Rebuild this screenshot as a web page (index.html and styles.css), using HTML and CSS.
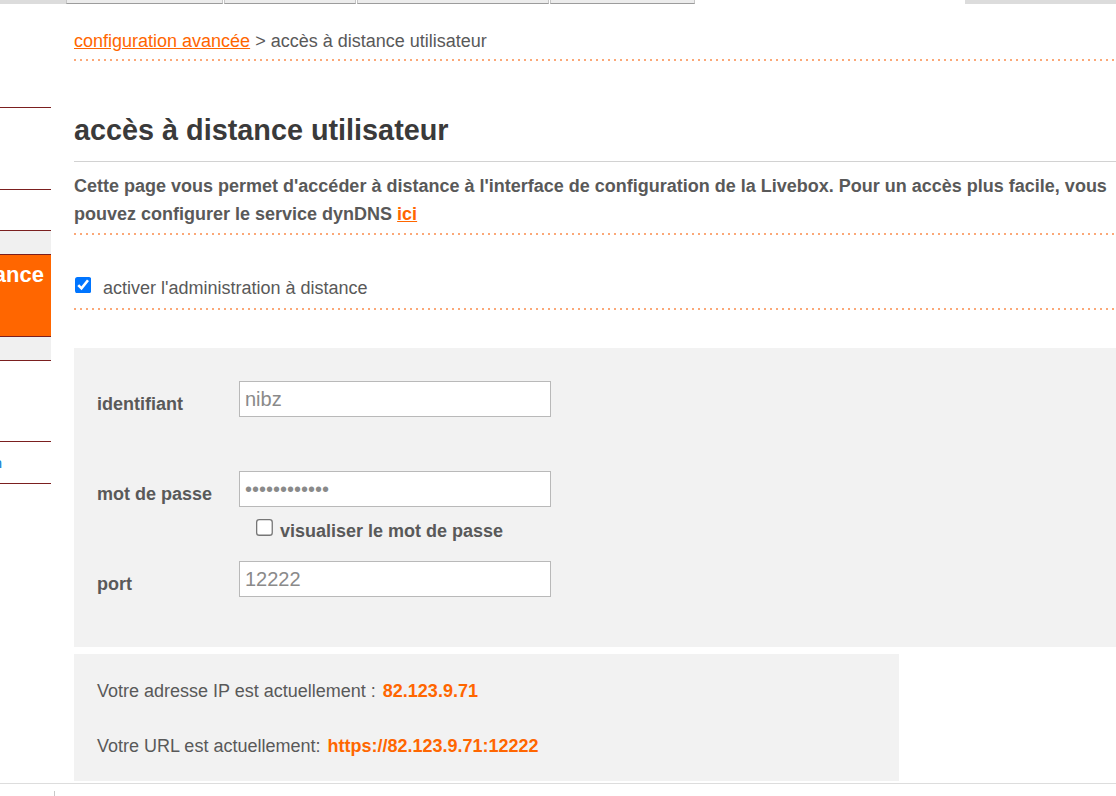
FILE: index.html
```html
<!DOCTYPE html>
<html lang="fr">
<head>
    <meta charset="UTF-8">
    <meta name="viewport" content="width=device-width, initial-scale=1.0">
    <title>accès à distance utilisateur</title>
    <link rel="stylesheet" href="styles.css">
</head>
<body>

    <div class="tabs">
        <div class="tabs-edge tabs-edge-left"></div>
        <div class="tab tab-1"></div>
        <div class="tab tab-2"></div>
        <div class="tab tab-3"></div>
        <div class="tab tab-4"></div>
        <div class="tabs-gap"></div>
        <div class="tabs-edge tabs-edge-right"></div>
    </div>

    <div class="page">
        <!-- menu de gauche (coupé par le défilement) -->
        <div class="sidebar">
            <div class="side-item side-a"></div>
            <div class="side-item side-b"></div>
            <div class="side-item side-c"></div>
            <div class="side-item side-active">
                <div class="side-active-label"><span>accès à distance</span></div>
            </div>
            <div class="side-item side-d"></div>
            <div class="side-item side-link"><span>utilisateurn</span></div>
        </div>

        <div class="main">
            <div class="breadcrumb">
                <a href="#">configuration avancée</a> &gt; accès à distance utilisateur
            </div>
            <div class="dots"></div>

            <h1>accès à distance utilisateur</h1>

            <p class="intro">Cette page vous permet d'accéder à distance à l'interface de configuration de la Livebox. Pour un accès plus facile, vous pouvez configurer le service dynDNS <a href="#">ici</a></p>
            <div class="dots"></div>

            <div class="enable-row">
                <input type="checkbox" id="enableRemote" checked>
                <label for="enableRemote">activer l'administration à distance</label>
            </div>
            <div class="dots"></div>

            <div class="form-panel">
                <div class="form-row">
                    <label for="login">identifiant</label>
                    <input type="text" id="login" value="nibz">
                </div>
                <div class="form-row form-row-pass">
                    <label for="password">mot de passe</label>
                    <input type="password" id="password" value="abcdefghijkl">
                </div>
                <div class="show-pass">
                    <input type="checkbox" id="showPass">
                    <label for="showPass">visualiser le mot de passe</label>
                </div>
                <div class="form-row form-row-port">
                    <label for="port">port</label>
                    <input type="text" id="port" value="12222">
                </div>
            </div>

            <div class="info-panel">
                <p>Votre adresse IP est actuellement : <span class="value">82.123.9.71</span></p>
                <p class="second">Votre URL est actuellement: <span class="value">https://82.123.9.71:12222</span></p>
            </div>
        </div>
    </div>

    <div class="footer">
        <div class="tick"></div>
    </div>

</body>
</html>
```

FILE: styles.css
```css
html, body {
    overflow: hidden;
}

body {
    margin: 0;
    font-family: "Liberation Sans", Arial, Helvetica, sans-serif;
    font-size: 18px;
    color: #595959;
    background-color: #ffffff;
}

a {
    color: #ff6600;
}

/* bandeau d'onglets en haut */
.tabs {
    display: flex;
    height: 4px;
}

.tabs-edge {
    background-color: #dcdcdc;
}

.tabs-edge-left {
    width: 66px;
}

.tabs-edge-right {
    width: 151px;
}

.tabs-gap {
    flex: 1;
}

.tab {
    box-sizing: border-box;
    background-color: #ececec;
    border: 1px solid #c6c6c6;
    border-top: none;
    border-bottom: 1px solid #9c9c9c;
    margin-right: 1px;
}

.tab-1 { width: 157px; }
.tab-2 { width: 132px; }
.tab-3 { width: 192px; }
.tab-4 { width: 145px; }

.page {
    display: flex;
    gap: 23px;
}

/* menu */
.sidebar {
    width: 51px;
    flex-shrink: 0;
    overflow: hidden;
}

.side-item {
    border-bottom: 1px solid #7b1f1f;
}

.side-a { height: 103px; }
.side-b { height: 81px; }
.side-c { height: 40px; }
.side-d { height: 80px; }

.side-active {
    background-color: #f0f0f0;
    padding: 23px 0;
}

.side-active-label {
    display: flex;
    justify-content: flex-end;
    overflow: hidden;
    height: 73px;
    padding-top: 8px;
    padding-right: 7px;
    background-color: #ff6600;
    border-top: 1px solid #7b1f1f;
    border-bottom: 1px solid #7b1f1f;
    color: #ffffff;
    font-weight: bold;
    font-size: 22px;
    line-height: 24px;
    white-space: nowrap;
}

.side-link {
    height: 30px;
    padding-top: 11px;
    display: flex;
    justify-content: flex-end;
    padding-right: 49px;
    font-size: 15px;
    line-height: 20px;
    color: #0b7fd1;
    white-space: nowrap;
    overflow: hidden;
}

/* contenu */
.main {
    width: 1045px;
    flex-shrink: 0;
}

.breadcrumb {
    padding: 27px 0 7px;
    line-height: 21px;
}

.dots {
    height: 2px;
    background-image: linear-gradient(to right, #fba878 2px, transparent 2px);
    background-size: 6px 2px;
}

h1 {
    margin: 52px 0 0;
    padding-bottom: 14px;
    border-bottom: 1px solid #d2d2d2;
    font-size: 28.8px;
    line-height: 34px;
    color: #3a3a3a;
}

.intro {
    margin: 10px 0 5px;
    font-weight: bold;
    line-height: 28px;
}

.intro a {
    font-weight: bold;
}

.enable-row {
    display: flex;
    align-items: flex-start;
    margin: 42px 0 9px;
}

/* les cases à cocher sont agrandies comme dans le navigateur zoomé */
.enable-row input {
    width: 13px;
    height: 13px;
    margin: 0 15px 3px 1px;
    transform: scale(1.25);
    transform-origin: top left;
}

.enable-row label {
    margin-top: 1px;
    line-height: 21px;
}

.form-panel {
    box-sizing: border-box;
    height: 299px;
    margin-top: 38px;
    padding: 33px 0 0 23px;
    background-color: #f2f2f2;
}

.form-row {
    display: flex;
    align-items: flex-start;
}

.form-row label {
    width: 142px;
    margin-top: 13px;
    font-weight: bold;
    line-height: 21px;
}

.form-row input {
    box-sizing: border-box;
    width: 312px;
    height: 36px;
    margin: 0;
    padding: 0 5px;
    border: 1px solid #b9b9b9;
    border-radius: 0;
    background-color: #ffffff;
    font-family: "Liberation Sans", Arial, sans-serif;
    font-size: 20px;
    color: #8a8a8a;
}

.form-row-pass {
    margin-top: 54px;
}

.show-pass {
    display: flex;
    align-items: flex-start;
    margin: 12px 0 0 159px;
}

.show-pass input {
    width: 13px;
    height: 13px;
    margin: 0 11px 4px 0;
    transform: scale(1.3);
    transform-origin: top left;
}

.show-pass label {
    margin-top: 2px;
    font-weight: bold;
    line-height: 21px;
}

.form-row-port {
    margin-top: 19px;
}

.info-panel {
    box-sizing: border-box;
    width: 825px;
    height: 127px;
    margin-top: 7px;
    padding: 27px 23px 0;
    background-color: #f2f2f2;
}

.info-panel p {
    margin: 0;
    line-height: 21px;
}

.info-panel p.second {
    margin-top: 34px;
}

.value {
    margin-left: 2px;
    font-weight: bold;
    color: #ff6600;
}

.footer {
    margin-top: 2px;
    border-top: 1px solid #dddddd;
}

.tick {
    width: 1px;
    height: 6px;
    margin: 7px 0 0 54px;
    background-color: #c8c8c8;
}
```
